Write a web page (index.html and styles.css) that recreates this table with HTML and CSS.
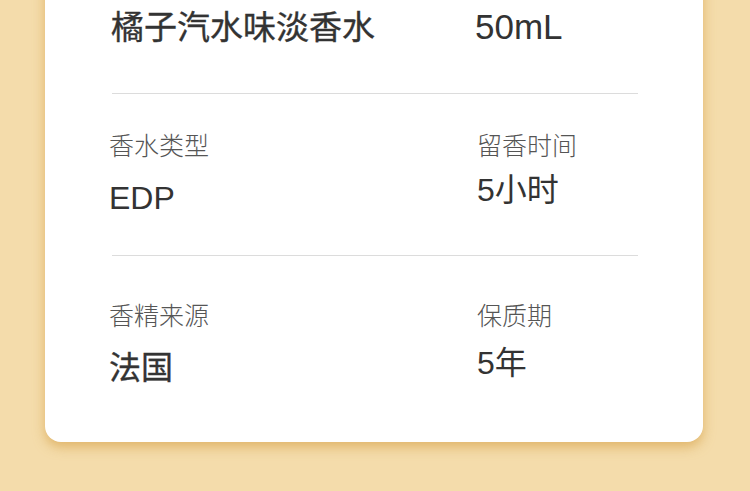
FILE: index.html
```html
<!DOCTYPE html>
<html lang="zh-CN">
<head>
<meta charset="utf-8">
<title>香水参数</title>
<link rel="stylesheet" href="styles.css">
</head>
<body>
<div class="card">
  <div class="row row-top">
    <div class="title">橘子汽水味淡香水</div>
    <div class="volume">50mL</div>
  </div>
  <div class="divider"></div>
  <div class="row row-mid">
    <div class="cell">
      <div class="label">香水类型</div>
      <div class="value value-left">EDP</div>
    </div>
    <div class="cell">
      <div class="label">留香时间</div>
      <div class="value value-right">5小时</div>
    </div>
  </div>
  <div class="divider"></div>
  <div class="row row-bottom">
    <div class="cell">
      <div class="label">香精来源</div>
      <div class="value value-left strong">法国</div>
    </div>
    <div class="cell">
      <div class="label">保质期</div>
      <div class="value value-right">5年</div>
    </div>
  </div>
</div>
</body>
</html>
```
FILE: styles.css
```css
html, body {
  margin: 0;
  padding: 0;
}
body {
  background: #f4dcab;
  font-family: "Liberation Sans", "Noto Sans CJK SC", sans-serif;
  color: #333;
  height: 491px;
  overflow: hidden;
}
.card {
  margin: -42px 47px 0 45px;
  background: #fff;
  border-radius: 16px;
  box-shadow: 0 5px 12px rgba(214, 160, 70, 0.65);
  padding: 0 0 54px 64px;
}
.row {
  display: grid;
  grid-template-columns: 368px 1fr;
}
.row-top {
  padding: 47px 0 43px;
  align-items: baseline;
}
.row-mid {
  padding: 36px 0 37px;
}
.row-bottom {
  padding: 44px 0 0;
}
.title {
  font-size: 33px;
  line-height: 44px;
  font-weight: 400;
  margin-left: 2px;
  -webkit-text-stroke: 0.35px #333;
}
.volume {
  font-size: 35px;
  line-height: 44px;
  margin-left: -2px;
}
.divider {
  height: 1px;
  background: #dcdcdc;
  margin-left: 3px;
  width: 526px;
}
.label {
  font-size: 25px;
  line-height: 32px;
  font-weight: 300;
  color: #555;
}
.value {
  font-size: 32px;
  line-height: 40px;
  font-weight: 400;
}
.strong {
  -webkit-text-stroke: 0.35px #333;
}
.row-mid .value-left { margin-top: 16px; }
.row-mid .value-right { margin-top: 8px; }
.row-bottom .value-left { margin-top: 16px; }
.row-bottom .value-right { margin-top: 11px; }
```
